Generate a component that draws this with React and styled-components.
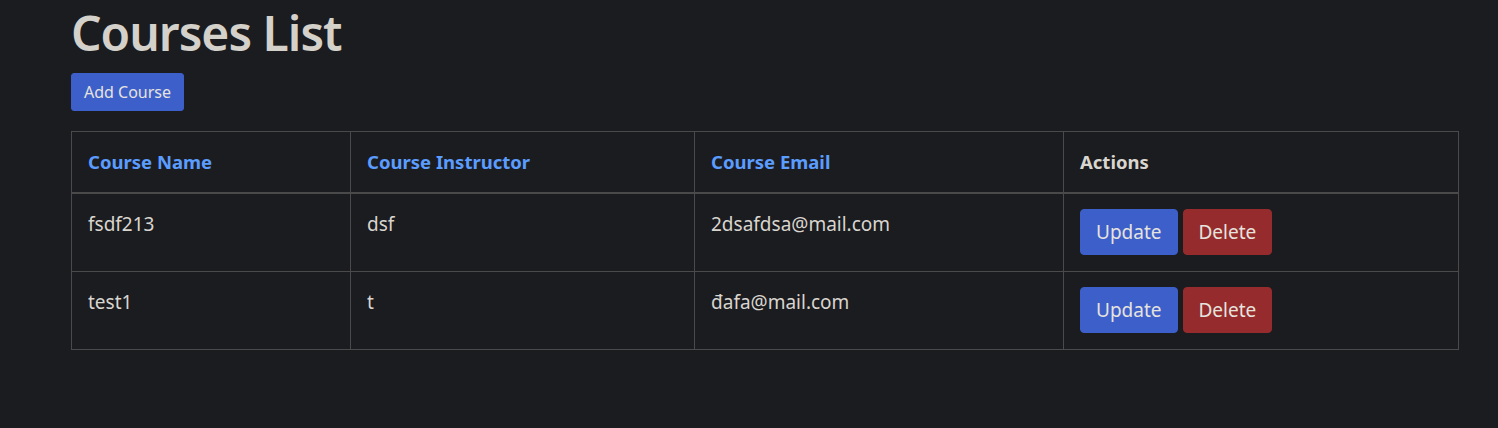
import styled, { createGlobalStyle } from 'styled-components';

const GlobalStyle = createGlobalStyle`
  body {
    margin: 0;
    background: #1b1c1f;
    color: #d9d5cf;
    font-family: "Noto Sans", "Segoe UI", "Liberation Sans", sans-serif;
  }
`

const Page = styled.div`
  padding: 0 39px 0 71px;
  min-height: 428px;
  box-sizing: border-box;
`
const Titulo = styled.h1`
  margin: 0 0 8px;
  font-size: 48px;
  font-weight: 600;
  letter-spacing: -1px;
  line-height: 65px;
  color: #d4d0ca;
`
const Boton = styled.button`
  font-family: inherit;
  color: #e6e3de;
  background: ${props => props.$color || '#3d5fc9'};
  border: 1px solid ${props => props.$color || '#3d5fc9'};
  border-radius: ${props => props.$large ? '4px' : '3px'};
  font-size: ${props => props.$large ? '19px' : '16px'};
  line-height: ${props => props.$large ? '28px' : '24px'};
  padding: ${props => props.$large ? '8px 15px' : '6px 12px'};
  cursor: pointer;
`
const Tabla = styled.table`
  margin-top: 20px;
  width: 100%;
  table-layout: fixed;
  border-collapse: collapse;
  font-size: 19px;
  line-height: 30px;
`
const Th = styled.th`
  box-sizing: border-box;
  text-align: left;
  padding: 15px 16px;
  border: 1px solid #4a4a4a;
  border-bottom-width: 2px;
  color: ${props => props.$plain ? '#d9d5cf' : '#5b9cff'};
  font-size: 18.5px;
  font-weight: 700;
  width: ${props => props.$w || 'auto'};
`
const Td = styled.td`
  padding: 15px 16px 16px;
  border: 1px solid #4a4a4a;
  vertical-align: top;
`
const Acciones = styled.div`
  display: flex;
  gap: 5px;
`

const cursos = [
  { nombre: 'fsdf213', instructor: 'dsf', email: '2dsafdsa@mail.com' },
  { nombre: 'test1', instructor: 't', email: 'đafa@mail.com' },
];

function App() {
  return (
    <>
      <GlobalStyle />
      <Page>
        <Titulo>Courses List</Titulo>
        <Boton>Add Course</Boton>
        <Tabla>
          <thead>
            <tr>
              <Th $w="279px">Course Name</Th>
              <Th $w="344px">Course Instructor</Th>
              <Th $w="369px">Course Email</Th>
              <Th $plain>Actions</Th>
            </tr>
          </thead>
          <tbody>
            {cursos.map(c => (
              <tr key={c.nombre}>
                <Td>{c.nombre}</Td>
                <Td>{c.instructor}</Td>
                <Td>{c.email}</Td>
                <Td>
                  <Acciones>
                    <Boton $large>Update</Boton>
                    <Boton $large $color="#952b2d">Delete</Boton>
                  </Acciones>
                </Td>
              </tr>
            ))}
          </tbody>
        </Tabla>
      </Page>
    </>
  );
}

export default App;
